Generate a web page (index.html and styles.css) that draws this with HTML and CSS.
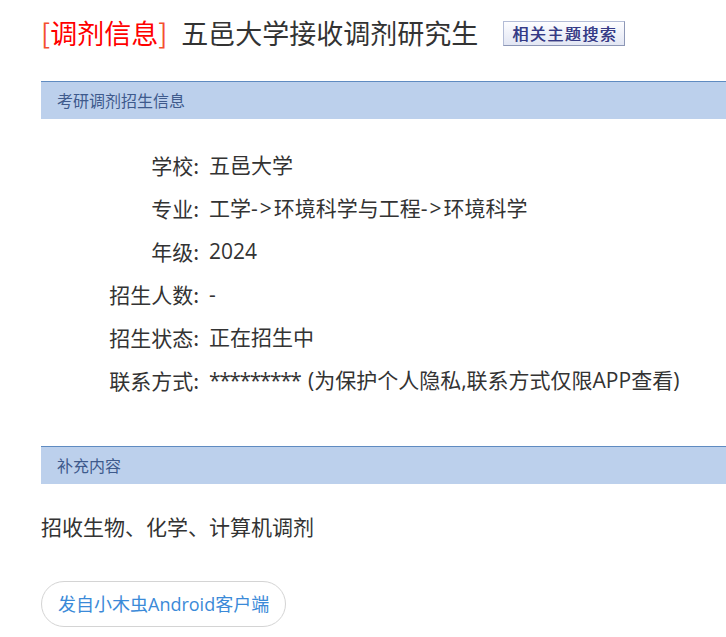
FILE: index.html
```html
<!DOCTYPE html>
<html lang="zh-CN">
<head>
  <meta charset="UTF-8">
  <meta name="viewport" content="width=device-width, initial-scale=1">
  <title>五邑大学接收调剂研究生</title>
  <link rel="stylesheet" href="styles.css">
</head>
<body>

<div class="page">
  <h1 class="title">
    <span class="tag"><span class="br">[</span>调剂信息<span class="br">]</span></span>
    <span class="name">五邑大学接收调剂研究生</span>
    <a class="topic-btn" href="#">相关主题搜索</a>
  </h1>

  <div class="section-head">考研调剂招生信息</div>
  <div class="info">
    <div class="label">学校:</div><div class="value">五邑大学</div>
    <div class="label">专业:</div><div class="value">工学<span class="arrow">-&gt;</span>环境科学与工程<span class="arrow">-&gt;</span>环境科学</div>
    <div class="label">年级:</div><div class="value">2024</div>
    <div class="label">招生人数:</div><div class="value">-</div>
    <div class="label">招生状态:</div><div class="value">正在招生中</div>
    <div class="label">联系方式:</div><div class="value"><span class="mask">*********</span> (为保护个人隐私,联系方式仅限APP查看)</div>
  </div>

  <div class="section-head">补充内容</div>
  <p class="extra">招收生物、化学、计算机调剂</p>

  <a class="app-btn" href="#">发自小木虫Android客户端</a>
</div>

</body>
</html>
```

FILE: styles.css
```css
* {
  box-sizing: border-box;
  margin: 0;
  padding: 0;
}

body {
  font-family: "Noto Sans CJK SC", sans-serif;
  background: #fff;
  color: #333;
  overflow: hidden;
}

.page {
  padding: 14px 0 0 41px;
}

.title {
  display: flex;
  align-items: center;
  font-weight: normal;
  font-size: 27px;
  height: 38px;
  line-height: 38px;
}

.tag {
  color: #f00;
}

.tag .br {
  color: #f4502f;
}

.name {
  margin-left: 14px;
  color: #333;
}

.topic-btn {
  margin-left: 25px;
  display: inline-block;
  height: 25px;
  line-height: 23px;
  padding: 0 7px 0 8px;
  font-size: 16px;
  color: #363a86;
  text-decoration: none;
  text-shadow: 0.4px 0 0 #363a86;
  border: 1px solid #b3bcd6;
  border-right-color: #8d97b6;
  border-bottom-color: #8d97b6;
  background: linear-gradient(#fdfdff, #e2e6f3);
  letter-spacing: 1.5px;
}

.section-head {
  margin-top: 29px;
  height: 38px;
  line-height: 37px;
  padding-left: 16px;
  font-size: 16px;
  color: #3e5a8c;
  background: #bcd0ec;
  border-top: 1px solid #5f8bc1;
}

.info {
  display: grid;
  grid-template-columns: 158px 1fr;
  column-gap: 10px;
  padding: 25px 0 15px;
  font-size: 21px;
  line-height: 43px;
}

.label {
  text-align: right;
}

.value {
  font-family: "Open Sans", "Noto Sans CJK SC", sans-serif;
  white-space: nowrap;
}

.arrow {
  letter-spacing: 2px;
}

.mask {
  letter-spacing: -1.4px;
  margin-right: 2px;
}

.extra {
  margin-top: 27px;
  font-size: 21px;
  line-height: 30px;
}

.app-btn {
  display: inline-block;
  margin-top: 40px;
  height: 46px;
  line-height: 44px;
  padding: 0 16px;
  font-family: "Open Sans", "Noto Sans CJK SC", sans-serif;
  font-size: 18px;
  color: #3b8ad8;
  text-decoration: none;
  border: 1px solid #d4d4d4;
  border-radius: 23px;
}
```
